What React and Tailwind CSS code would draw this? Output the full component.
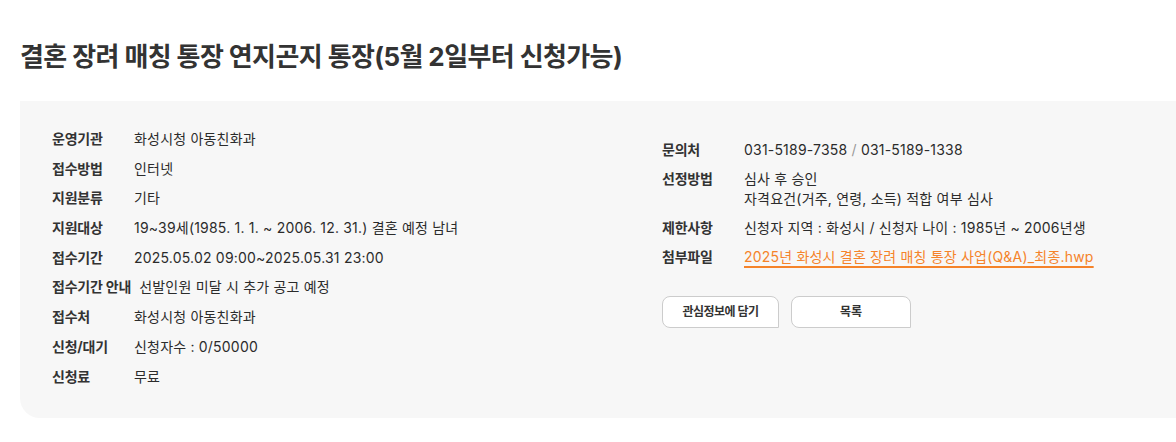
import React from 'react';

const leftRows = [
  ['운영기관', '화성시청 아동친화과'],
  ['접수방법', '인터넷'],
  ['지원분류', '기타'],
  ['지원대상', '19~39세(1985. 1. 1. ~ 2006. 12. 31.) 결혼 예정 남녀'],
  ['접수기간', '2025.05.02 09:00~2025.05.31 23:00'],
  ['접수기간 안내', '선발인원 미달 시 추가 공고 예정'],
  ['접수처', '화성시청 아동친화과'],
  ['신청/대기', '신청자수 : 0/50000'],
  ['신청료', '무료'],
];

const Row = ({ label, children }) => (
  <div className="flex items-start leading-[20px]">
    <span className="mr-2 min-w-[74px] shrink-0 font-bold tracking-[-0.2px] text-[#333]">{label}</span>
    <div className="tracking-[0.2px] text-[#2b2b2b]">{children}</div>
  </div>
);

const App = () => {
  return (
    <div
      className="w-[1176px] h-[442px] bg-white overflow-hidden"
      style={{ fontFamily: 'Inter, "Noto Sans CJK KR", sans-serif' }}
    >
      <h1 className="pl-5 pt-[40px] text-[26px] leading-[34px] font-bold tracking-[-0.6px] text-[#333]">
        결혼 장려 매칭 통장 연지곤지 통장(5월 2일부터 신청가능)
      </h1>
      <div className="ml-5 mt-[27px] h-[317px] rounded-bl-[20px] bg-[#f7f7f7] pl-8 pt-[28px] text-[14px]">
        <div className="flex">
          <div className="flex w-[610px] flex-col gap-[9.7px]">
            {leftRows.map(([label, value]) => (
              <Row key={label} label={label}>{value}</Row>
            ))}
          </div>
          <div className="flex flex-col pt-[11px]">
            <div className="flex flex-col gap-[9px]">
              <Row label="문의처">
                031-5189-7358 <span className="text-[#999]">/</span> 031-5189-1338
              </Row>
              <Row label="선정방법">
                <p>심사 후 승인</p>
                <p>자격요건(거주, 연령, 소득) 적합 여부 심사</p>
              </Row>
              <Row label="제한사항">신청자 지역 : 화성시 / 신청자 나이 : 1985년 ~ 2006년생</Row>
              <Row label="첨부파일">
                <a className="text-[#f5832a] underline decoration-[#f5832a] decoration-[1.5px] underline-offset-[4px]">
                  2025년 화성시 결혼 장려 매칭 통장 사업(Q&amp;A)_최종.hwp
                </a>
              </Row>
            </div>
            <div className="mt-[29px] flex gap-3">
              <button className="h-[32px] w-[117px] rounded-t-[8px] rounded-bl-[8px] border border-[#ccc] bg-white text-[12px] font-bold tracking-[-0.5px] text-[#333]">
                관심정보에 담기
              </button>
              <button className="h-[32px] w-[120px] rounded-t-[8px] rounded-bl-[8px] border border-[#ccc] bg-white text-[12px] font-bold text-[#333]">
                목록
              </button>
            </div>
          </div>
        </div>
      </div>
    </div>
  );
};

export default App;
